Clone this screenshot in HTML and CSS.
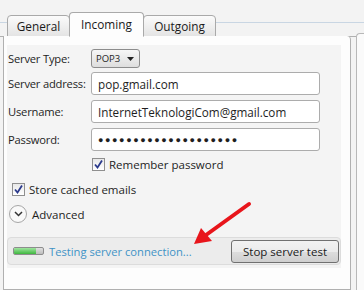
FILE: index.html
```html
<!DOCTYPE html>
<html lang="en">
<head>
    <meta charset="UTF-8">
    <title>Account settings</title>
    <link rel="stylesheet" href="styles.css">
</head>
<body>
    <div class="tabbar">
        <div class="tab-lead"></div>
        <div class="tab tab-general">General</div>
        <div class="tab tab-incoming active">Incoming</div>
        <div class="tab tab-outgoing">Outgoing</div>
        <div class="tab-rest"></div>
    </div>

    <div class="main">
        <div class="panel">
            <div class="content">
                <div class="row row-type">
                    <label>Server Type:</label>
                    <div class="select">
                        <span>POP3</span>
                        <svg width="7" height="4" viewBox="0 0 7 4"><path d="M0 0 H7 L3.5 4 Z" fill="#222"/></svg>
                    </div>
                </div>
                <div class="row">
                    <label>Server address:</label>
                    <input type="text" class="field" value="pop.gmail.com">
                </div>
                <div class="row">
                    <label>Username:</label>
                    <input type="text" class="field" value="InternetTeknologiCom@gmail.com">
                </div>
                <div class="row">
                    <label>Password:</label>
                    <input type="text" class="field password" value="●●●●●●●●●●●●●●●●●●●●">
                </div>

                <div class="check-row remember">
                    <span class="check">
                        <svg width="9" height="9" viewBox="0 0 9 9"><path d="M1 4.5 L3.5 7.5 L8 0.5" fill="none" stroke="#2b3a8c" stroke-width="1.8"/></svg>
                    </span>
                    Remember password
                </div>

                <div class="check-row cached">
                    <span class="check">
                        <svg width="9" height="9" viewBox="0 0 9 9"><path d="M1 4.5 L3.5 7.5 L8 0.5" fill="none" stroke="#2b3a8c" stroke-width="1.8"/></svg>
                    </span>
                    Store cached emails
                </div>

                <div class="advanced">
                    <span class="expander">
                        <svg width="9" height="6" viewBox="0 0 9 6"><path d="M1 1 L4.5 4.5 L8 1" fill="none" stroke="#333" stroke-width="1.5"/></svg>
                    </span>
                    Advanced
                </div>

                <div class="status">
                    <div class="progress"><div class="progress-fill" style="width: 22px;"></div></div>
                    <span class="status-text">Testing server connection...</span>
                    <button class="stop-btn">Stop server test</button>
                </div>
            </div>
        </div>
        <div class="side"></div>
    </div>

    <!-- annotation arrow drawn over the screenshot -->
    <svg class="arrow" width="70" height="50" viewBox="0 0 70 50">
        <line x1="63" y1="3" x2="20" y2="34" stroke="#e8151b" stroke-width="4" stroke-linecap="round"/>
        <polygon points="8,43 15,27 26,40" fill="#e8151b"/>
    </svg>
</body>
</html>
```

FILE: styles.css
```css
* {
    margin: 0;
    padding: 0;
    box-sizing: border-box;
}

body {
    background: #f3f3f3;
    color: #1e1e1e;
    font-family: 'Open Sans', sans-serif;
    font-size: 11.5px;
    width: 364px;
    height: 290px;
    overflow: hidden;
    position: relative;
}

/* tab strip */
.tabbar {
    display: flex;
    align-items: flex-end;
    height: 37px;
}

.tab-lead,
.tab-rest {
    height: 15px;
    border-top: 1px solid #c9d6e3;
    border-bottom: 1px solid #b0b0b0;
}

.tab-lead {
    width: 7px;
}

.tab-rest {
    flex: 1;
}

.tab {
    height: 22px;
    border: 1px solid #a9a9a9;
    border-radius: 4px 4px 0 0;
    background: linear-gradient(#fbfbfb, #e4e4e4);
    display: flex;
    align-items: center;
    justify-content: center;
    font-size: 11.8px;
    color: #1a1a1a;
}

.tab-general {
    width: 63px;
}

.tab-incoming {
    width: 75px;
    margin-left: -1px;
}

.tab-outgoing {
    width: 73px;
    margin-left: -1px;
}

.tab.active {
    height: 25px;
    background: #fdfdfd;
    border-bottom-color: #fdfdfd;
    position: relative;
    z-index: 1;
    padding-bottom: 2px;
}

/* main area */
.main {
    display: flex;
    height: 253px;
}

.panel {
    width: 348px;
    margin-left: 3px;
    margin-top: -1px;
    border: 1px solid #b0b0b0;
    border-top: none;
    border-radius: 0 4px 0 0;
    background: #fdfdfd;
    padding: 9px 9px 0 3px;
}

.side {
    flex: 1;
    margin-left: 5px;
    margin-top: -4px;
    border: 1px solid #b8b8b8;
    border-right: none;
    border-bottom: none;
    border-radius: 4px 0 0 0;
    background: #fafafa;
}

.content {
    background: #f4f4f4;
    padding: 4px 0 3px 0;
}

.row {
    display: flex;
    align-items: center;
    height: 23px;
    margin-bottom: 5px;
}

.row-type {
    height: 19px;
    margin-bottom: 4px;
}

label {
    width: 84px;
    padding-left: 1px;
    white-space: nowrap;
    font-size: 11.2px;
    letter-spacing: -0.2px;
}

.select {
    width: 49px;
    height: 19px;
    border: 1px solid #8c8c8c;
    border-radius: 3px;
    background: linear-gradient(#f6f6f6, #dedede);
    display: flex;
    align-items: center;
    justify-content: space-between;
    padding: 0 5px 0 4px;
    font-size: 9.5px;
}

.field {
    width: 229px;
    height: 23px;
    border: 1px solid #acacac;
    border-radius: 3px;
    background: white;
    padding: 0 6px;
    font-family: 'Open Sans', sans-serif;
    font-size: 11.7px;
    color: #1e1e1e;
    outline: none;
}

.password {
    font-size: 9px;
    letter-spacing: 1.6px;
}

.check-row {
    display: flex;
    align-items: center;
    height: 14px;
}

.remember {
    margin: 6px 0 0 85px;
}

.cached {
    margin: 11px 0 0 5px;
}

.check {
    width: 13px;
    height: 13px;
    border: 1px solid #8f8f8f;
    background: linear-gradient(#e8e8e8, #ffffff);
    display: flex;
    align-items: center;
    justify-content: center;
    margin-right: 4px;
}

.advanced {
    display: flex;
    align-items: center;
    margin: 9px 0 0 2px;
    height: 18px;
}

.expander {
    width: 18px;
    height: 18px;
    border: 1px solid #a6a6a6;
    border-radius: 50%;
    background: #f9f9f9;
    display: flex;
    align-items: center;
    justify-content: center;
    margin-right: 5px;
}

/* status bar */
.status {
    display: flex;
    align-items: center;
    height: 28px;
    margin-top: 14px;
    border: 1px solid #dcdcdc;
    border-radius: 4px;
    background: #ececec;
    padding: 0 1px 0 5px;
}

.progress {
    width: 31px;
    height: 8px;
    border: 1px solid #8d8d8d;
    border-radius: 2px;
    background: linear-gradient(#e0e0e0, #bdbdbd);
    margin-right: 5px;
    overflow: hidden;
}

.progress-fill {
    height: 100%;
    background: linear-gradient(#9fe59f, #3fb73f);
}

.status-text {
    flex: 1;
    color: #3f93c6;
    font-size: 11.2px;
}

.stop-btn {
    width: 108px;
    height: 23px;
    border: 1px solid #707070;
    border-radius: 3px;
    background: linear-gradient(#f2f2f2 0%, #ebebeb 50%, #dddddd 51%, #cfcfcf 100%);
    font-family: 'Open Sans', sans-serif;
    font-size: 11.5px;
    color: #1a1a1a;
}

.arrow {
    position: absolute;
    left: 186px;
    top: 201px;
}
```
